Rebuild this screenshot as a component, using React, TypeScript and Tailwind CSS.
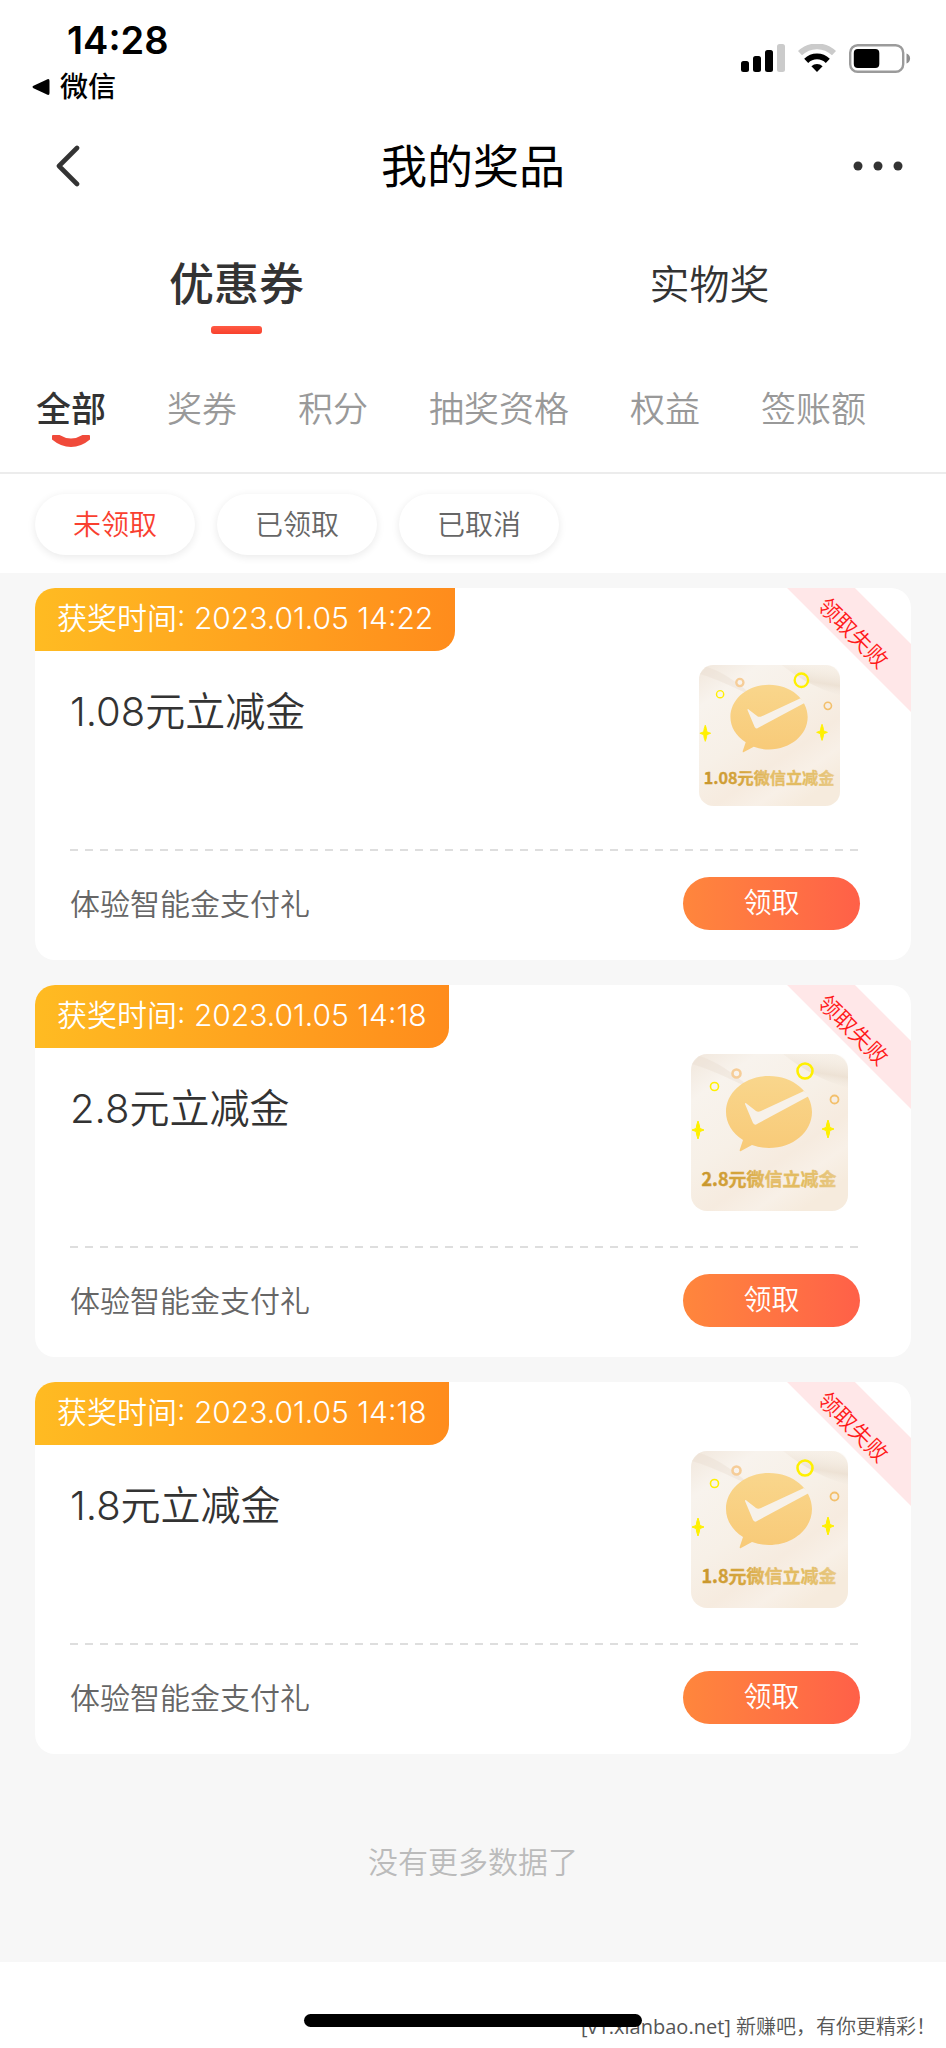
import type { ReactNode } from 'react';

const categories = ['全部', '奖券', '积分', '抽奖资格', '权益', '签账额'];
const filters = ['未领取', '已领取', '已取消'];

type Prize = { time: string; amount: string; small?: boolean };

const prizes: Prize[] = [
  { time: '2023.01.05 14:22', amount: '1.08', small: true },
  { time: '2023.01.05 14:18', amount: '2.8' },
  { time: '2023.01.05 14:18', amount: '1.8' },
];

function SignalIcon() {
  return (
    <svg width="44" height="28" viewBox="0 0 44 28" aria-hidden="true">
      <rect x="0" y="17" width="8" height="11" rx="2.5" />
      <rect x="12" y="12" width="8" height="16" rx="2.5" />
      <rect x="24" y="6" width="8" height="22" rx="2.5" />
      <rect x="36" y="0" width="8" height="28" rx="2.5" fill="#cbcbcb" />
    </svg>
  );
}

function WifiIcon() {
  return (
    <svg width="38" height="28" viewBox="0 0 38 28" fill="none" aria-hidden="true">
      <path d="M2 9.2A24.5 24.5 0 0 1 36 9.2" stroke="#cbcbcb" strokeWidth="5.8" />
      <path d="M8.2 16.8A15.6 15.6 0 0 1 29.8 16.8" stroke="#000" strokeWidth="5.8" />
      <path d="M13.4 22.2a8.3 8.3 0 0 1 11.2 0L19 28Z" fill="#000" />
    </svg>
  );
}

function BatteryIcon() {
  return (
    <svg width="62" height="29" viewBox="0 0 62 29" fill="none" aria-hidden="true">
      <rect x="1.2" y="1.2" width="53" height="26.6" rx="7.5" stroke="#9b9b9b" strokeWidth="2.4" />
      <rect x="4.8" y="5" width="25.5" height="19" rx="4" fill="#000" />
      <path d="M57.5 9.6c4.8 1.4 4.8 8.4 0 9.8Z" fill="#8e8e8e" />
    </svg>
  );
}

function Star({ x, y }: { x: number; y: number }) {
  return (
    <g transform={`translate(${x} ${y})`}>
      <path
        d="M0-9Q1.6-5 1.8-1.6L6 0 1.8 1.6Q1.6 5 0 9Q-1.6 5-1.8 1.6L-6 0-1.8-1.6Q-1.6-5 0-9Z"
        fill="#fff000"
        stroke="#fff000"
        strokeWidth="1"
        strokeLinejoin="round"
      />
    </g>
  );
}

function CouponArt({ label, small }: { label: string; small?: boolean }) {
  return (
    <div className={small ? 'w-[141px]' : 'w-[157px]'}>
      <svg viewBox="0 0 157 157" className="block w-full" role="img" aria-label={label}>
        <defs>
          <linearGradient id="art-bg" x1="0" y1="0" x2="0.7" y2="1">
            <stop offset="0" stopColor="#f1e7dc" />
            <stop offset="0.2" stopColor="#f8f3ed" />
            <stop offset="0.5" stopColor="#f7f0e7" />
            <stop offset="0.72" stopColor="#f6ebdf" />
            <stop offset="0.86" stopColor="#f8f0e7" />
            <stop offset="1" stopColor="#f6ebdd" />
          </linearGradient>
          <linearGradient id="art-shade" x1="0.7" y1="0" x2="0.4" y2="1">
            <stop offset="0" stopColor="#f6efe6" stopOpacity="0.2" />
            <stop offset="0.55" stopColor="#e9dccd" stopOpacity="0.7" />
            <stop offset="1" stopColor="#f8f4ee" stopOpacity="0" />
          </linearGradient>
          <linearGradient id="art-bubble" x1="0" y1="0" x2="0" y2="1">
            <stop offset="0" stopColor="#f9d68c" />
            <stop offset="1" stopColor="#f8ca78" />
          </linearGradient>
          <linearGradient id="art-text" x1="0" y1="0" x2="1" y2="0">
            <stop offset="0" stopColor="#c8962c" />
            <stop offset="0.3" stopColor="#d6a63f" />
            <stop offset="0.5" stopColor="#e4bd68" />
            <stop offset="0.75" stopColor="#e2bb5f" />
            <stop offset="1" stopColor="#e8c987" />
          </linearGradient>
        </defs>
        <rect width="157" height="157" rx="16" fill="url(#art-bg)" />
        <path d="M92 0H141Q157 0 157 16V34Q122 24 92 0Z" fill="url(#art-shade)" />
        <path d="M1 10Q22 16 62 36Q30 8 8 2Z" fill="#e9dccf" opacity="0.4" />
        <path
          d="M78 22C102 22 121 38 121 58S102 94 78 94Q69 94 61 91L50 97Q48 98 49 95L52 86C41 79 35 69 35 58C35 38 54 22 78 22Z"
          fill="url(#art-bubble)"
        />
        <path d="M54 50Q54 48 56 50L65 57Q67 58.5 70 57L113 37L118 42L66 70Q64 72 62 69Z" fill="#f7f1e9" />
        <circle cx="114" cy="17" r="7.5" fill="none" stroke="#fff000" strokeWidth="2.6" />
        <circle cx="23.5" cy="32.5" r="4" fill="none" stroke="#fff000" strokeWidth="1.6" />
        <circle cx="45.5" cy="19.5" r="4" fill="none" stroke="#f6cd98" strokeWidth="2.6" />
        <circle cx="143.5" cy="45.5" r="4" fill="none" stroke="#f3c06c" strokeWidth="1.8" />
        <Star x={7} y={76} />
        <Star x={137} y={75} />
        <text
          x="78"
          y="132"
          textAnchor="middle"
          fontSize="18"
          fontWeight="700"
          fontFamily="'Noto Sans CJK SC', sans-serif"
          fill="url(#art-text)"
          stroke="url(#art-text)"
          strokeWidth="0.4"
        >
          {label}
        </text>
      </svg>
    </div>
  );
}

function Ribbon({ children }: { children: ReactNode }) {
  return (
    <div className="absolute top-[21px] -right-[75px] flex h-[48px] w-[240px] rotate-45 items-end justify-center bg-[#ffe7e8] pr-[18px] text-[22px] leading-[30px] text-[#ff1a1a]">
      {children}
    </div>
  );
}

function PrizeCard({ prize }: { prize: Prize }) {
  return (
    <li className="relative overflow-hidden rounded-[20px] bg-white">
      <div className="flex">
        <p className="rounded-br-[20px] bg-linear-to-r from-[#ffbb22] to-[#ff8c1c] px-[22px] pt-[8px] pb-[10px] text-[30px] leading-[45px] text-white">
          获奖时间: {prize.time}
        </p>
      </div>
      <Ribbon>领取失败</Ribbon>
      <div className="mr-[51px] ml-[35px]">
        <div className="flex h-[198px] items-start justify-between">
          <h2 className="pt-[37px] text-[40px] leading-[48px] text-[#333]">{prize.amount}元立减金</h2>
          <div className="flex h-[169px] w-[182px] items-center justify-center">
            <CouponArt label={`${prize.amount}元微信立减金`} small={prize.small} />
          </div>
        </div>
        <div className="h-[2px] bg-[repeating-linear-gradient(90deg,#dedede_0_8px,transparent_8px_15px)]" />
        <div className="flex h-[109px] items-center justify-between pb-[4px]">
          <p className="text-[30px] leading-[44px] text-[#666]">体验智能金支付礼</p>
          <button
            type="button"
            className="h-[53px] w-[177px] rounded-full bg-linear-to-r from-[#ff863c] to-[#ff6048] text-[28px] leading-[53px] text-white"
          >
            领取
          </button>
        </div>
      </div>
    </li>
  );
}

export default function App() {
  return (
    <div className="relative flex min-h-screen flex-col bg-white font-['Inter','Noto_Sans_CJK_SC',sans-serif] font-[350] text-[#333]">
      <div className="flex h-[112px] items-start justify-between pr-[35px] pl-[32px] text-black">
        <div>
          <p className="mt-[18px] ml-[35px] text-[38px] leading-[44px] font-semibold">14:28</p>
          <a href="#wechat" className="flex items-center gap-[10px] pt-[5px] text-[28px] leading-[40px] font-medium">
            <svg width="18" height="18" viewBox="0 0 18 18" aria-hidden="true">
              <path d="M1.5 7.8 15.5 1.2Q17.5 0.5 17.5 3V15Q17.5 17.5 15.5 16.8L1.5 10.2Q-0.5 9 1.5 7.8Z" />
            </svg>
            微信
          </a>
        </div>
        <div className="flex gap-[13px] pt-[44px]">
          <SignalIcon />
          <WifiIcon />
          <BatteryIcon />
        </div>
      </div>

      <header className="flex h-[108px] items-center justify-between px-[42px]">
        <button type="button" aria-label="返回" className="flex w-[52px] justify-center">
          <svg width="24" height="42" viewBox="0 0 24 42" fill="none" aria-hidden="true">
            <path d="M21 3 3 21 21 39" stroke="#333" strokeWidth="4.6" strokeLinecap="round" strokeLinejoin="round" />
          </svg>
        </button>
        <h1 className="text-[46px] leading-[64px] font-normal text-black">我的奖品</h1>
        <button type="button" aria-label="更多" className="flex w-[52px] justify-center">
          <svg width="50" height="10" viewBox="0 0 50 10" fill="#333" aria-hidden="true">
            <circle cx="5" cy="5" r="4.5" />
            <circle cx="25" cy="5" r="4.5" />
            <circle cx="45" cy="5" r="4.5" />
          </svg>
        </button>
      </header>

      <nav className="grid h-[126px] grid-cols-2 pt-[33px]">
        <button type="button" className="flex flex-col items-center text-[45px] leading-[64px] font-medium">
          优惠券
          <span className="mt-[9px] h-[8px] w-[51px] rounded-[3px] bg-linear-to-b from-[#ff5a44] to-[#f8402c]" />
        </button>
        <button type="button" className="flex flex-col items-center text-[40px] leading-[64px]">
          实物奖
        </button>
      </nav>

      <nav className="flex h-[128px] gap-[61px] border-b-2 border-[#ececec] px-[36px] pt-[38px]">
        {categories.map((name, i) => (
          <button
            key={name}
            type="button"
            className={
              i === 0
                ? 'flex flex-col items-center text-[35px] leading-[50px] font-medium text-[#333]'
                : 'flex flex-col items-center text-[35px] leading-[50px] text-[#999]'
            }
          >
            {name}
            {i === 0 && (
              <svg width="38" height="13" viewBox="0 0 38 13" aria-hidden="true">
                <path d="M1 1H7.5Q19 8 30.5 1H37Q38 1 38 2V5.5Q29 13 19 13T0 5.5V2Q0 1 1 1Z" fill="#f04a3a" />
              </svg>
            )}
          </button>
        ))}
      </nav>

      <div className="flex gap-[22px] px-[35px] pt-[20px] pb-[18px]">
        {filters.map((name, i) => (
          <button
            key={name}
            type="button"
            className={
              i === 0
                ? 'h-[61px] w-[160px] rounded-full bg-white text-[28px] text-[#f9402f] shadow-[0_2px_8px_rgba(0,0,0,0.09)]'
                : 'h-[61px] w-[160px] rounded-full bg-white text-[28px] text-[#666] shadow-[0_2px_8px_rgba(0,0,0,0.09)]'
            }
          >
            {name}
          </button>
        ))}
      </div>

      <main className="bg-[#f7f7f7] px-[35px] pt-[15px]">
        <ul className="flex flex-col gap-[25px]">
          {prizes.map((prize) => (
            <PrizeCard key={prize.amount} prize={prize} />
          ))}
        </ul>
        <p className="pt-[86px] pb-[78px] text-center text-[30px] leading-[44px] text-[#bbb]">没有更多数据了</p>
      </main>

      <footer className="relative flex h-[85px] items-end justify-end pr-[10px] pb-[5px]">
        <p className="font-['Open_Sans','Noto_Sans_CJK_SC',sans-serif] text-[20px] leading-[30px] text-[#555]">
          <span className="font-normal">[v1.xianbao.net]</span> 新赚吧，有你更精彩！
        </p>
        <span className="absolute bottom-[20px] left-1/2 h-[13px] w-[338px] -translate-x-1/2 rounded-full bg-black" />
      </footer>
    </div>
  );
}
